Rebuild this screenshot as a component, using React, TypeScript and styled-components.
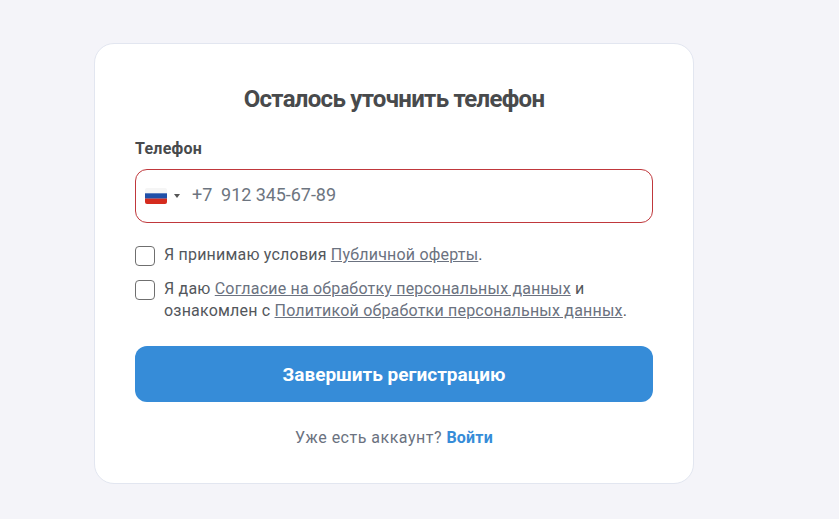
import React from 'react'
import styled, { createGlobalStyle } from 'styled-components'

const GlobalStyle = createGlobalStyle`
  html, body {
    margin: 0;
    height: 100%;
    background: #f4f4f9;
    font-family: Roboto, "Liberation Sans", sans-serif;
    overflow: hidden;
  }
`

const Page = styled.div`
  display: flex;
  align-items: flex-start;
  padding: 43px 0 0 94px;
`

const Card = styled.form`
  box-sizing: border-box;
  width: 600px;
  height: 441px;
  padding: 40px;
  background: #fff;
  border: 1px solid #e2e6f0;
  border-radius: 20px;
`

const Title = styled.h1`
  margin: 0 0 25px;
  font-size: 24px;
  line-height: 30px;
  font-weight: 700;
  letter-spacing: -0.7px;
  text-align: center;
  color: #484a4c;
`

const Label = styled.label`
  display: block;
  margin-bottom: 10px;
  font-size: 16px;
  line-height: 20px;
  font-weight: 700;
  letter-spacing: 0.25px;
  color: #484a4c;
`

const PhoneField = styled.div`
  box-sizing: border-box;
  display: flex;
  align-items: center;
  height: 54px;
  padding: 0 9px;
  border: 1px solid #c0383c;
  border-radius: 12px;
`

const Flag = styled.svg`
  width: 22px;
  height: 16px;
  border-radius: 2px;
`

const Caret = styled.span`
  width: 0;
  height: 0;
  margin: 0 12px 0 7px;
  border-left: 3px solid transparent;
  border-right: 3px solid transparent;
  border-top: 4px solid #555;
`

const PhoneInput = styled.input`
  flex: 1;
  min-width: 0;
  padding: 0 0 3px;
  border: 0;
  outline: 0;
  font: inherit;
  font-size: 18px;
  letter-spacing: -0.05px;
  color: #6d7580;
  background: transparent;
`

const Agreements = styled.div`
  display: flex;
  flex-direction: column;
  gap: 12px;
  margin: 21px 0 24px;
`

const Agreement = styled.label`
  display: flex;
  gap: 9px;
  font-size: 16px;
  line-height: 22px;
  letter-spacing: 0.2px;
  color: #53575c;
`

const CheckBox = styled.input.attrs({ type: 'checkbox' })`
  appearance: none;
  flex: none;
  box-sizing: border-box;
  width: 20px;
  height: 20px;
  margin: 2px 0 0;
  background: #fff;
  border: 1.5px solid #6f6f6f;
  border-radius: 4px;
`

const DocLink = styled.a`
  color: #6b7280;
  text-decoration: underline;
`

const Submit = styled.button`
  display: block;
  width: 100%;
  height: 56px;
  border: 0;
  border-radius: 12px;
  background: #368cd8;
  color: #fff;
  font: inherit;
  font-size: 19px;
  font-weight: 700;
`

const Footer = styled.p`
  margin: 26px 0 0;
  font-size: 16px;
  line-height: 20px;
  letter-spacing: 0.5px;
  text-align: center;
  color: #6b7280;
`

const LoginLink = styled.a`
  color: #368cd8;
  font-weight: 700;
  letter-spacing: 0.2px;
  text-decoration: none;
`

const App = () => (
  <>
    <GlobalStyle />
    <Page>
      <Card>
        <Title>Осталось уточнить телефон</Title>
        <Label htmlFor="phone">Телефон</Label>
        <PhoneField>
          <Flag viewBox="0 0 22 16">
            <rect width="22" height="5.4" fill="#f5f5f5" />
            <rect y="5.3" width="22" height="5.4" fill="#1f4fa8" />
            <rect y="10.6" width="22" height="5.4" fill="#d52b1e" />
          </Flag>
          <Caret />
          <PhoneInput id="phone" defaultValue="+7  912 345-67-89" />
        </PhoneField>
        <Agreements>
          <Agreement>
            <CheckBox />
            <span>
              Я принимаю условия <DocLink>Публичной оферты</DocLink>.
            </span>
          </Agreement>
          <Agreement>
            <CheckBox />
            <span>
              Я даю <DocLink>Согласие на обработку персональных данных</DocLink> и
              ознакомлен с <DocLink>Политикой обработки персональных данных</DocLink>.
            </span>
          </Agreement>
        </Agreements>
        <Submit type="button">Завершить регистрацию</Submit>
        <Footer>
          Уже есть аккаунт? <LoginLink>Войти</LoginLink>
        </Footer>
      </Card>
    </Page>
  </>
)

export default App
